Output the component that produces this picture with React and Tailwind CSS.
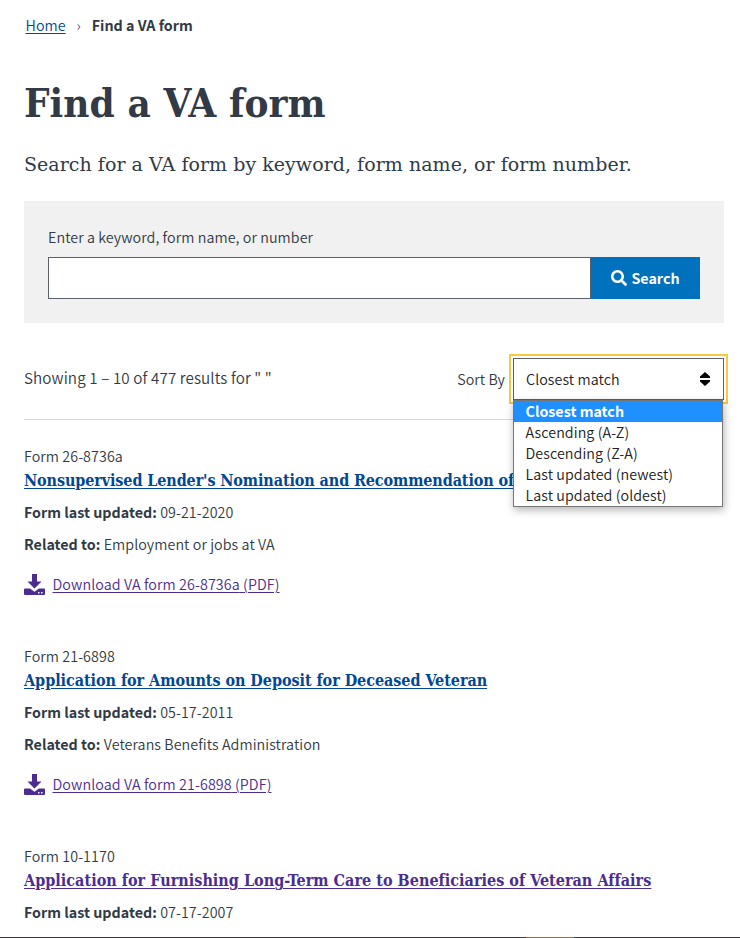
import { FaSearch } from "react-icons/fa";

const sans = "font-['Noto_Sans_CJK_SC','Noto_Sans',sans-serif]";
const serifCondensed = "font-['DejaVu_Serif_Condensed','DejaVu_Serif',serif] [font-stretch:condensed]";
const serif = "font-['DejaVu_Serif',serif]";

const forms = [
  {
    id: "26-8736a",
    title: "Nonsupervised Lender's Nomination and Recommendation of",
    updated: "09-21-2020",
    related: "Employment or jobs at VA",
    color: "text-[#004795]",
    tracking: "tracking-[-0.11px]",
  },
  {
    id: "21-6898",
    title: "Application for Amounts on Deposit for Deceased Veteran",
    updated: "05-17-2011",
    related: "Veterans Benefits Administration",
    color: "text-[#004795]",
    tracking: "tracking-[-0.05px]",
  },
  {
    id: "10-1170",
    title: "Application for Furnishing Long-Term Care to Beneficiaries of Veteran Affairs",
    updated: "07-17-2007",
    related: null,
    color: "text-[#4c2c92]",
    tracking: "tracking-[0.02px]",
  },
];

const options = [
  "Closest match",
  "Ascending (A-Z)",
  "Descending (Z-A)",
  "Last updated (newest)",
  "Last updated (oldest)",
];

function DownloadIcon() {
  return (
    <svg className="-ml-[0.5px]" width="21" height="21" viewBox="0 0 21 21" fill="#4c2c92" aria-hidden="true">
      <path d="M8 0h5v7.500h4.500L10.500 14.500 3.500 7.500H8z" />
      <path
        fillRule="evenodd"
        d="M1 14.500h5l4.500 3.200 4.500-3.200H20a1 1 0 0 1 1 1V20a1 1 0 0 1-1 1H1a1 1 0 0 1-1-1v-4.500a1 1 0 0 1 1-1zM14 18v1.500h1.500V18zM17 18v1.500h1.500V18z"
      />
    </svg>
  );
}

function FormResult({ form }) {
  return (
    <li className="h-[200px] whitespace-nowrap">
      <p className="h-6 leading-[22px]">Form {form.id}</p>
      <h3 className={`h-6 text-[16px] font-bold leading-6 ${serifCondensed}`}>
        <a href="#" className={`underline decoration-1 underline-offset-2 ${form.color} ${form.tracking}`}>
          {form.title}
        </a>
      </h3>
      <p className="mt-2 h-6 leading-[22px]">
        <b className="tracking-normal">Form last updated:</b> {form.updated}
      </p>
      {form.related && (
        <>
          <p className="mt-2 h-6 leading-[22px]">
            <b className="tracking-normal">Related to:</b> {form.related}
          </p>
          <a href="#" className="mt-[15px] flex h-6 items-center gap-2 leading-6 text-[#4c2c92]">
            <DownloadIcon />
            <span className="tracking-[0.09px] underline decoration-1 underline-offset-2">
              Download VA form {form.id} (PDF)
            </span>
          </a>
        </>
      )}
    </li>
  );
}

export default function App() {
  return (
    <div className={`flex h-[938px] w-[740px] flex-col overflow-hidden bg-white text-[14.3px] font-[350] tracking-[0.07px] text-[#323a45] ${sans}`}>
      <main className="min-h-0 flex-1 overflow-hidden pl-6 pr-4">
        <nav className="flex h-[50px] items-center pl-[1.5px] leading-6">
          <a href="#" className="text-[#004795] underline decoration-1 underline-offset-2">Home</a>
          <span className="w-[26px] text-center text-[#5b616b]">›</span>
          <b className="tracking-normal">Find a VA form</b>
        </nav>
        <h1 className={`mt-[27px] h-[52px] whitespace-nowrap text-[40px] font-bold leading-[52px] ${serifCondensed}`}>
          Find a VA form
        </h1>
        <p className={`mt-5 h-[30px] whitespace-nowrap text-[19px] font-normal leading-[30px] tracking-[0.04px] ${serif}`}>
          Search for a VA form by keyword, form name, or form number.
        </p>
        <form className="mt-[22px] h-[122px] bg-[#f1f1f1] px-6 pt-6">
          <label className="block h-6 leading-6">Enter a keyword, form name, or number</label>
          <div className="mt-2 flex h-[42px]">
            <div className="w-[542px] border border-r-0 border-[#5b616b] bg-white" />
            <button type="button" className="flex w-[110px] items-center justify-center gap-1 border-l border-[#5b616b] bg-[#0071bc] font-bold tracking-normal text-white">
              <FaSearch size={16} />
              Search
            </button>
          </div>
        </form>
        <section className="flex h-[97px] items-start justify-between border-b border-[#d6d7d9] pt-[35px]">
          <p className="pt-[7px] text-[15.2px] leading-6 tracking-[0.11px]">Showing 1 – 10 of 477 results for " "</p>
          <div className="flex items-center gap-2">
            <span className="leading-6">Sort By</span>
            <div className="relative flex h-[42px] w-[211px] items-center justify-between border border-[#5b616b] pl-3 pr-[13px] text-[#212121] outline-2 outline-offset-[2px] outline-[#f9c642]">
              <span>Closest match</span>
              <svg width="10" height="14" viewBox="0 0 10 14" fill="#000" aria-hidden="true">
                <path d="M5 0l5 4.500V6H0V4.500zM5 14L0 9.500V8h10v1.500z" />
              </svg>
              <ul className="absolute -left-px top-[41px] z-10 h-[107px] w-[210px] border border-[#767676] bg-white shadow-[1px_3px_8px_rgba(0,0,0,0.3)]">
                {options.map((o, i) => (
                  <li
                    key={o}
                    className={`h-[21px] whitespace-nowrap pl-[11.5px] leading-[19px] ${i === 0 ? "bg-[#1e90ff] font-bold tracking-normal text-white" : "text-[#212121]"}`}
                  >
                    {o}
                  </li>
                ))}
              </ul>
            </div>
          </div>
        </section>
        <ul className="pt-[25px]">
          {forms.map((f) => (
            <FormResult key={f.id} form={f} />
          ))}
        </ul>
      </main>
      <footer className="flex h-px shrink-0 bg-[#3a3838]">
        <div className="ml-[526px] w-12 bg-[#b0622f]" />
      </footer>
    </div>
  );
}
